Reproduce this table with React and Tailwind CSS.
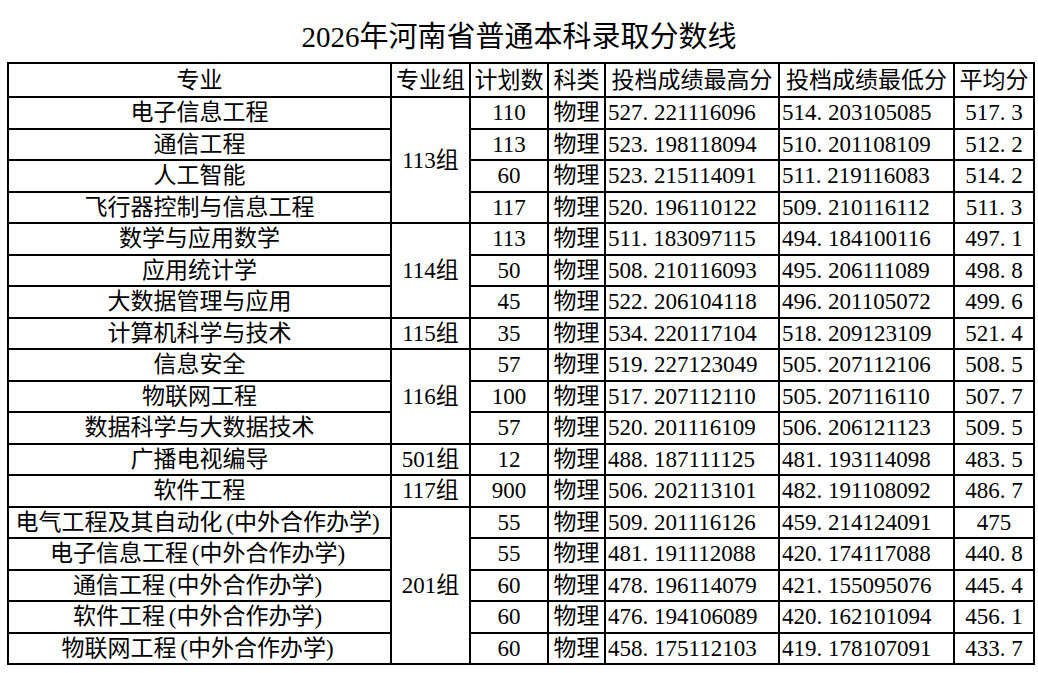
const rows = [
  ['电子信息工程', ['113组', 4], '110', '527.221116096', '514.203105085', '517.3'],
  ['通信工程', null, '113', '523.198118094', '510.201108109', '512.2'],
  ['人工智能', null, '60', '523.215114091', '511.219116083', '514.2'],
  ['飞行器控制与信息工程', null, '117', '520.196110122', '509.210116112', '511.3'],
  ['数学与应用数学', ['114组', 3], '113', '511.183097115', '494.184100116', '497.1'],
  ['应用统计学', null, '50', '508.210116093', '495.206111089', '498.8'],
  ['大数据管理与应用', null, '45', '522.206104118', '496.201105072', '499.6'],
  ['计算机科学与技术', ['115组', 1], '35', '534.220117104', '518.209123109', '521.4'],
  ['信息安全', ['116组', 3], '57', '519.227123049', '505.207112106', '508.5'],
  ['物联网工程', null, '100', '517.207112110', '505.207116110', '507.7'],
  ['数据科学与大数据技术', null, '57', '520.201116109', '506.206121123', '509.5'],
  ['广播电视编导', ['501组', 1], '12', '488.187111125', '481.193114098', '483.5'],
  ['软件工程', ['117组', 1], '900', '506.202113101', '482.191108092', '486.7'],
  ['电气工程及其自动化(中外合作办学)', ['201组', 5], '55', '509.201116126', '459.214124091', '475'],
  ['电子信息工程(中外合作办学)', null, '55', '481.191112088', '420.174117088', '440.8'],
  ['通信工程(中外合作办学)', null, '60', '478.196114079', '421.155095076', '445.4'],
  ['软件工程(中外合作办学)', null, '60', '476.194106089', '420.162101094', '456.1'],
  ['物联网工程(中外合作办学)', null, '60', '458.175112103', '419.178107091', '433.7'],
];

const cell = 'border-2 border-black p-0 leading-none whitespace-nowrap';

// SimSun-like half-width punctuation: period and parens take 0.5em
function Num({ v }) {
  const [a, b] = v.split('.');
  if (b === undefined) return v;
  return (
    <>
      {a}
      <span className="inline-block w-[0.5em] text-left">.</span>
      {b}
    </>
  );
}

function Name({ v }) {
  const m = v.match(/^(.*)\((.*)\)$/);
  if (!m) return v;
  return (
    <>
      {m[1]}
      <span className="inline-block w-[0.5em] text-right">(</span>
      {m[2]}
      <span className="inline-block w-[0.5em] text-left">)</span>
    </>
  );
}

export default function App() {
  return (
    <div
      className="w-[1038px] h-[673px] bg-white text-black"
      style={{ fontFamily: '"Liberation Serif", "Noto Sans CJK SC", serif' }}
    >
      <div className="h-[62px] pt-[17px] text-center text-[29px] leading-[40px]">
        2026年河南省普通本科录取分数线
      </div>
      <table className="ml-[7px] w-[1026px] table-fixed border-collapse text-[23px]">
        <colgroup>
          <col className="w-[383px]" />
          <col className="w-[79px]" />
          <col className="w-[78px]" />
          <col className="w-[57px]" />
          <col className="w-[174px]" />
          <col className="w-[175px]" />
          <col className="w-[80px]" />
        </colgroup>
        <thead>
          <tr className="h-[34px]">
            {['专业', '专业组', '计划数', '科类', '投档成绩最高分', '投档成绩最低分', '平均分'].map((h) => (
              <th key={h} className={`${cell} font-normal text-center`}>{h}</th>
            ))}
          </tr>
        </thead>
        <tbody>
          {rows.map(([name, group, plan, hi, lo, avg]) => (
            <tr key={name} className="h-[31.5px]">
              <td className={`${cell} text-center`}><Name v={name} /></td>
              {group && (
                <td rowSpan={group[1]} className={`${cell} text-center`}>{group[0]}</td>
              )}
              <td className={`${cell} text-center`}>{plan}</td>
              <td className={`${cell} text-center`}>物理</td>
              <td className={`${cell} text-left pl-[2px]`}><Num v={hi} /></td>
              <td className={`${cell} text-left pl-[2px]`}><Num v={lo} /></td>
              <td className={`${cell} text-center`}><Num v={avg} /></td>
            </tr>
          ))}
        </tbody>
      </table>
    </div>
  );
}
